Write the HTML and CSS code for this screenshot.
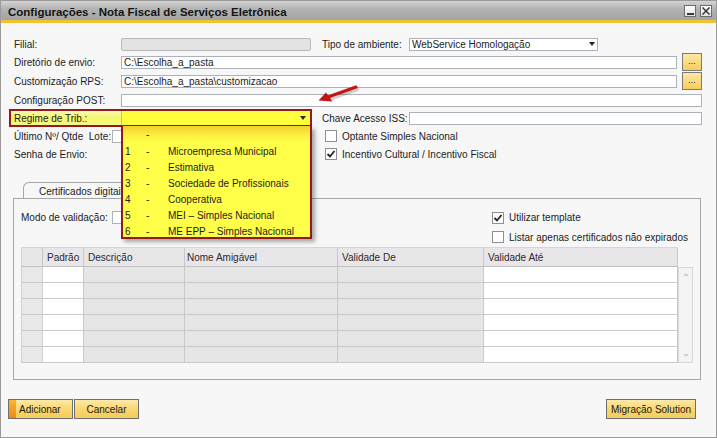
FILE: index.html
```html
<!DOCTYPE html>
<html lang="pt-BR">
<head>
<meta charset="utf-8">
<title>Configurações - Nota Fiscal de Serviços Eletrônica</title>
<link rel="stylesheet" href="styles.css">
</head>
<body>
<div class="window">
  <div class="titlebar">
    <span class="title">Configurações - Nota Fiscal de Serviços Eletrônica</span>
    <div class="wbtns">
      <span class="wbtn"><span class="minbar"></span></span>
      <span class="wbtn"><svg width="10" height="10" viewBox="0 0 10 10"><path d="M1.5 1.5 L8.5 8.5 M8.5 1.5 L1.5 8.5" stroke="#3a3a3a" stroke-width="1.6"/></svg></span>
    </div>
  </div>

  <div class="content">
    <div class="form">
      <div class="row h18">
        <span class="lbl">Filial:</span>
        <span class="inp ro w190"></span>
        <span class="lbl-r">Tipo de ambiente:</span>
        <span class="sel w189"><span>WebService Homologação</span><i class="arrow"></i></span>
      </div>
      <div class="row h18">
        <span class="lbl">Diretório de envio:</span>
        <span class="inp grow">C:\Escolha_a_pasta</span>
        <span class="dots">...</span>
      </div>
      <div class="row h20">
        <span class="lbl">Customização RPS:</span>
        <span class="inp grow">C:\Escolha_a_pasta\customizacao</span>
        <span class="dots">...</span>
      </div>
      <div class="row h18">
        <span class="lbl">Configuração POST:</span>
        <span class="inp grow"></span>
      </div>
      <div class="row h18">
        <div class="hl">
          <span class="hl-lbl">Regime de Trib.:</span>
          <span class="hl-sel"><i class="arrow"></i></span>
        </div>
        <span class="lbl-r r2">Chave Acesso ISS:</span>
        <span class="inp grow"></span>
      </div>
      <div class="row h18">
        <div class="lhalf">
          <span class="lbl short">Último Nº/ Qtde&nbsp; Lote:</span>
          <span class="inp w100"></span>
        </div>
        <span class="chk"></span><span class="chk-t">Optante Simples Nacional</span>
      </div>
      <div class="row h18">
        <div class="lhalf">
          <span class="lbl">Senha de Envio:</span>
        </div>
        <span class="chk"><svg width="10" height="10" viewBox="0 0 10 10"><path d="M1.5 5 L4 7.5 L8.5 2" fill="none" stroke="#222" stroke-width="1.8"/></svg></span><span class="chk-t">Incentivo Cultural / Incentivo Fiscal</span>
      </div>
    </div>

    <div class="tabs">
      <div class="tab">Certificados digitais</div>
      <div class="panel">
        <div class="prow">
          <div class="pleft">
            <span class="plbl">Modo de validação:</span>
            <span class="inp w100"></span>
          </div>
          <span class="chk"><svg width="10" height="10" viewBox="0 0 10 10"><path d="M1.5 5 L4 7.5 L8.5 2" fill="none" stroke="#222" stroke-width="1.8"/></svg></span><span class="chk-t">Utilizar template</span>
        </div>
        <div class="prow2">
          <span class="chk"></span><span class="chk-t">Listar apenas certificados não expirados</span>
        </div>
        <div class="gridwrap">
          <div class="grid">
            <div class="hc"></div><div class="hc">Padrão</div><div class="hc">Descrição</div><div class="hc">Nome Amigável</div><div class="hc">Validade De</div><div class="hc">Validade Até</div>
            <div class="c g"></div><div class="c w"></div><div class="c g"></div><div class="c g"></div><div class="c g"></div><div class="c w"></div>
            <div class="c g"></div><div class="c w"></div><div class="c g"></div><div class="c g"></div><div class="c g"></div><div class="c w"></div>
            <div class="c g"></div><div class="c w"></div><div class="c g"></div><div class="c g"></div><div class="c g"></div><div class="c w"></div>
            <div class="c g"></div><div class="c w"></div><div class="c g"></div><div class="c g"></div><div class="c g"></div><div class="c w"></div>
            <div class="c g"></div><div class="c w"></div><div class="c g"></div><div class="c g"></div><div class="c g"></div><div class="c w"></div>
            <div class="c g"></div><div class="c w"></div><div class="c g"></div><div class="c g"></div><div class="c g"></div><div class="c w"></div>
          </div>
          <div class="vscroll"><i class="up"></i><i class="down"></i></div>
        </div>
      </div>
    </div>

    <div class="footer">
      <div class="btns">
        <span class="btn b65"><span class="stripe"></span><span class="btxt">Adicionar</span></span>
        <span class="btn b65 center">Cancelar</span>
      </div>
      <span class="btn b90 center">Migração Solution</span>
    </div>
  </div>

  <div class="dropdown">
    <div class="opt first"><span class="n"></span><span class="d">-</span><span class="t"></span></div>
    <div class="opt"><span class="n">1</span><span class="d">-</span><span class="t">Microempresa Municipal</span></div>
    <div class="opt"><span class="n">2</span><span class="d">-</span><span class="t">Estimativa</span></div>
    <div class="opt"><span class="n">3</span><span class="d">-</span><span class="t">Sociedade de Profissionais</span></div>
    <div class="opt"><span class="n">4</span><span class="d">-</span><span class="t">Cooperativa</span></div>
    <div class="opt"><span class="n">5</span><span class="d">-</span><span class="t">MEI – Simples Nacional</span></div>
    <div class="opt"><span class="n">6</span><span class="d">-</span><span class="t">ME EPP – Simples Nacional</span></div>
  </div>

  <svg class="redarrow" width="46" height="24" viewBox="0 0 46 24">
    <path d="M41 4.5 L13 14.5" stroke="rgba(0,0,0,0.18)" stroke-width="4" stroke-linecap="round" transform="translate(1,1.5)"/>
    <path d="M41 4 L13 14" stroke="#c41515" stroke-width="3" stroke-linecap="round"/>
    <path d="M3.5 17.5 L11 9.5 L17.5 18.5 Z" fill="#c41515"/>
  </svg>
</div>
</body>
</html>
```

FILE: styles.css
```css
html, body {
  margin: 0;
  padding: 0;
  background: #f7f7f7;
}

.window {
  position: relative;
  width: 717px;
  height: 438px;
  box-sizing: border-box;
  border: 1px solid #9a9a9a;
  background: #f7f7f7;
  overflow: hidden;
  font-family: "Liberation Sans", Arial, sans-serif;
  font-size: 10px;
  color: #1c1c1c;
}

/* title bar */
.titlebar {
  height: 22px;
  box-sizing: border-box;
  padding: 3px 4px 0 7px;
  display: flex;
  align-items: center;
  justify-content: space-between;
  background: linear-gradient(#d4d4d4, #b4b4b4 40%, #a4a4a4);
  border-bottom: 3px solid #f1c232;
}
.title {
  font-size: 11.5px;
  font-weight: bold;
  color: #141414;
  white-space: nowrap;
}
.wbtns {
  display: flex;
  gap: 4px;
  align-self: flex-start;
  margin-top: 1px;
}
.wbtn {
  width: 12px;
  height: 12px;
  box-sizing: border-box;
  border: 1px solid #6c6c6c;
  background: linear-gradient(#ffffff, #e2e2e2);
  display: flex;
  align-items: center;
  justify-content: center;
}
.minbar {
  width: 7px;
  height: 2px;
  background: #3a3a3a;
  align-self: flex-end;
  margin-bottom: 1px;
}

/* content */
.content {
  padding: 12px 14px 0 13px;
}

.row {
  display: flex;
  align-items: center;
}
.h18 { height: 18px; }
.h20 { height: 20px; }

.lbl {
  width: 107px;
  flex: none;
  white-space: nowrap;
}
.lbl.short { width: 98px; }
.lbl-r {
  width: 87px;
  margin-left: 11px;
  flex: none;
  white-space: nowrap;
}
.lbl-r.r2 { margin-left: 10px; }

.inp {
  height: 13px;
  box-sizing: border-box;
  border: 1px solid #adb2b8;
  background: #ffffff;
  padding: 0 2px;
  line-height: 11px;
  white-space: nowrap;
  overflow: hidden;
  flex: none;
}
.inp.ro {
  background: #e3e3e3;
  border-color: #b9b9b9;
  border-radius: 2px;
}
.grow { flex: 1; }
.w190 { width: 190px; }
.w189 { width: 189px; }
.w100 { width: 100px; }

.sel {
  height: 13px;
  box-sizing: border-box;
  border: 1px solid #adb2b8;
  background: #ffffff;
  padding: 0 1px 0 2px;
  display: flex;
  align-items: center;
  justify-content: space-between;
  line-height: 11px;
  white-space: nowrap;
}
.arrow {
  width: 0;
  height: 0;
  border-left: 3.5px solid transparent;
  border-right: 3.5px solid transparent;
  border-top: 4px solid #262626;
  margin-right: 1px;
}

.dots {
  width: 20px;
  height: 18px;
  margin-left: 5px;
  box-sizing: border-box;
  border: 1px solid #7b7b7b;
  background: linear-gradient(#fde9a4, #f7cd5a);
  display: flex;
  align-items: center;
  justify-content: center;
  font-size: 9px;
  line-height: 9px;
  padding-bottom: 2px;
  flex: none;
}

/* highlighted Regime row */
.hl {
  margin-left: -5px;
  width: 303px;
  height: 18px;
  box-sizing: border-box;
  border: 2px solid #951b1b;
  display: flex;
  flex: none;
}
.hl-lbl {
  width: 110px;
  box-sizing: border-box;
  padding-left: 3px;
  display: flex;
  align-items: center;
  background: linear-gradient(#fafab0, #f6f66a 50%, #f6f690);
  white-space: nowrap;
}
.hl-sel {
  flex: 1;
  border-left: 1px solid #c9c26a;
  background: #ffff3e;
  display: flex;
  align-items: center;
  justify-content: flex-end;
  padding-right: 3px;
}

.lhalf {
  width: 311px;
  display: flex;
  align-items: center;
  flex: none;
}

.chk {
  width: 12px;
  height: 12px;
  box-sizing: border-box;
  border: 1px solid #8d8f91;
  background: #ffffff;
  display: flex;
  align-items: center;
  justify-content: center;
  flex: none;
}
.chk-t {
  margin-left: 5px;
  white-space: nowrap;
}

/* tabs */
.tabs {
  margin-top: 19px;
}
.tab {
  margin-left: 9px;
  width: 130px;
  height: 16px;
  box-sizing: border-box;
  border: 1px solid #a6a6a6;
  border-bottom: none;
  border-top-left-radius: 6px;
  padding-left: 15px;
  line-height: 17px;
  white-space: nowrap;
}
.panel {
  margin: 0 1px 0 -1px;
  height: 182px;
  box-sizing: border-box;
  border: 1px solid #a6a6a6;
  padding: 9px 0 0 7px;
}
.prow {
  height: 19px;
  display: flex;
  align-items: center;
}
.pleft {
  width: 471px;
  display: flex;
  align-items: center;
  flex: none;
}
.plbl {
  width: 91px;
  flex: none;
  white-space: nowrap;
}
.prow2 {
  height: 20px;
  display: flex;
  align-items: center;
  padding-left: 471px;
}

/* grid */
.gridwrap {
  display: flex;
  align-items: flex-start;
}
.grid {
  display: grid;
  grid-template-columns: 21px 41px 101px 153px 146px 194px;
  grid-template-rows: 19px repeat(6, 16px);
  border-left: 1px solid #d2d2d2;
  border-top: 1px solid #d6d6d6;
}
.hc {
  background: #e9e6ea;
  border-right: 1px solid #c6c6c6;
  border-bottom: 1px solid #c0c0c0;
  padding-left: 4px;
  display: flex;
  align-items: center;
  white-space: nowrap;
  color: #2a2a2a;
}
.hc:nth-child(4) { padding-left: 2px; }
.c {
  border-right: 1px solid #c9c9c9;
  border-bottom: 1px solid #c9c9c9;
}
.c.g { background: #e6e6e6; }
.c.w { background: #ffffff; }
.grid .c:nth-child(6n+1) { background: #e8e8e8; border-right-color: #d0d0d0; }

.vscroll {
  margin-top: 20px;
  width: 15px;
  height: 96px;
  box-sizing: border-box;
  border: 1px solid #d6d6d6;
  background: #f4f4f4;
  display: flex;
  flex-direction: column;
  align-items: center;
  justify-content: space-between;
  padding: 5px 0;
}
.vscroll .up {
  width: 0; height: 0;
  border-left: 3px solid transparent;
  border-right: 3px solid transparent;
  border-bottom: 3px solid #cfcfcf;
}
.vscroll .down {
  width: 0; height: 0;
  border-left: 3px solid transparent;
  border-right: 3px solid transparent;
  border-top: 3px solid #cfcfcf;
}

/* footer */
.footer {
  display: flex;
  justify-content: space-between;
  margin: 19px 6px 0 -6px;
}
.btns {
  display: flex;
  gap: 1px;
}
.btn {
  height: 20px;
  box-sizing: border-box;
  border: 1px solid #6f6f6f;
  background: linear-gradient(#fdeaa8, #f8d468 60%, #f6cd5c);
  display: flex;
  align-items: center;
  white-space: nowrap;
  color: #1a1a1a;
}
.btn.center { justify-content: center; }
.b65 { width: 65px; }
.b90 { width: 90px; }
.stripe {
  width: 7px;
  align-self: stretch;
  background: linear-gradient(#f7b436, #ec8b0e);
}
.btxt { margin-left: 3px; }

/* open dropdown list (overlay) */
.dropdown {
  position: absolute;
  left: 120px;
  top: 125px;
  width: 191px;
  height: 113px;
  box-sizing: border-box;
  border: 2px solid #8f1b1b;
  border-top: none;
  background: #ffff4a;
  overflow: hidden;
  padding-left: 2px;
  box-shadow: 3px 3px 4px rgba(0, 0, 0, 0.32);
}
.opt {
  height: 16px;
  display: flex;
  align-items: center;
  white-space: nowrap;
}
.opt.first {
  margin-left: -2px;
  padding-left: 2px;
  margin-bottom: 1px;
  background: linear-gradient(#f3d12c, #fbee42 55%, #ffff4a);
}
.opt .n { width: 21px; flex: none; }
.opt .d { width: 22px; flex: none; }

.redarrow {
  position: absolute;
  left: 314px;
  top: 82px;
}
```
